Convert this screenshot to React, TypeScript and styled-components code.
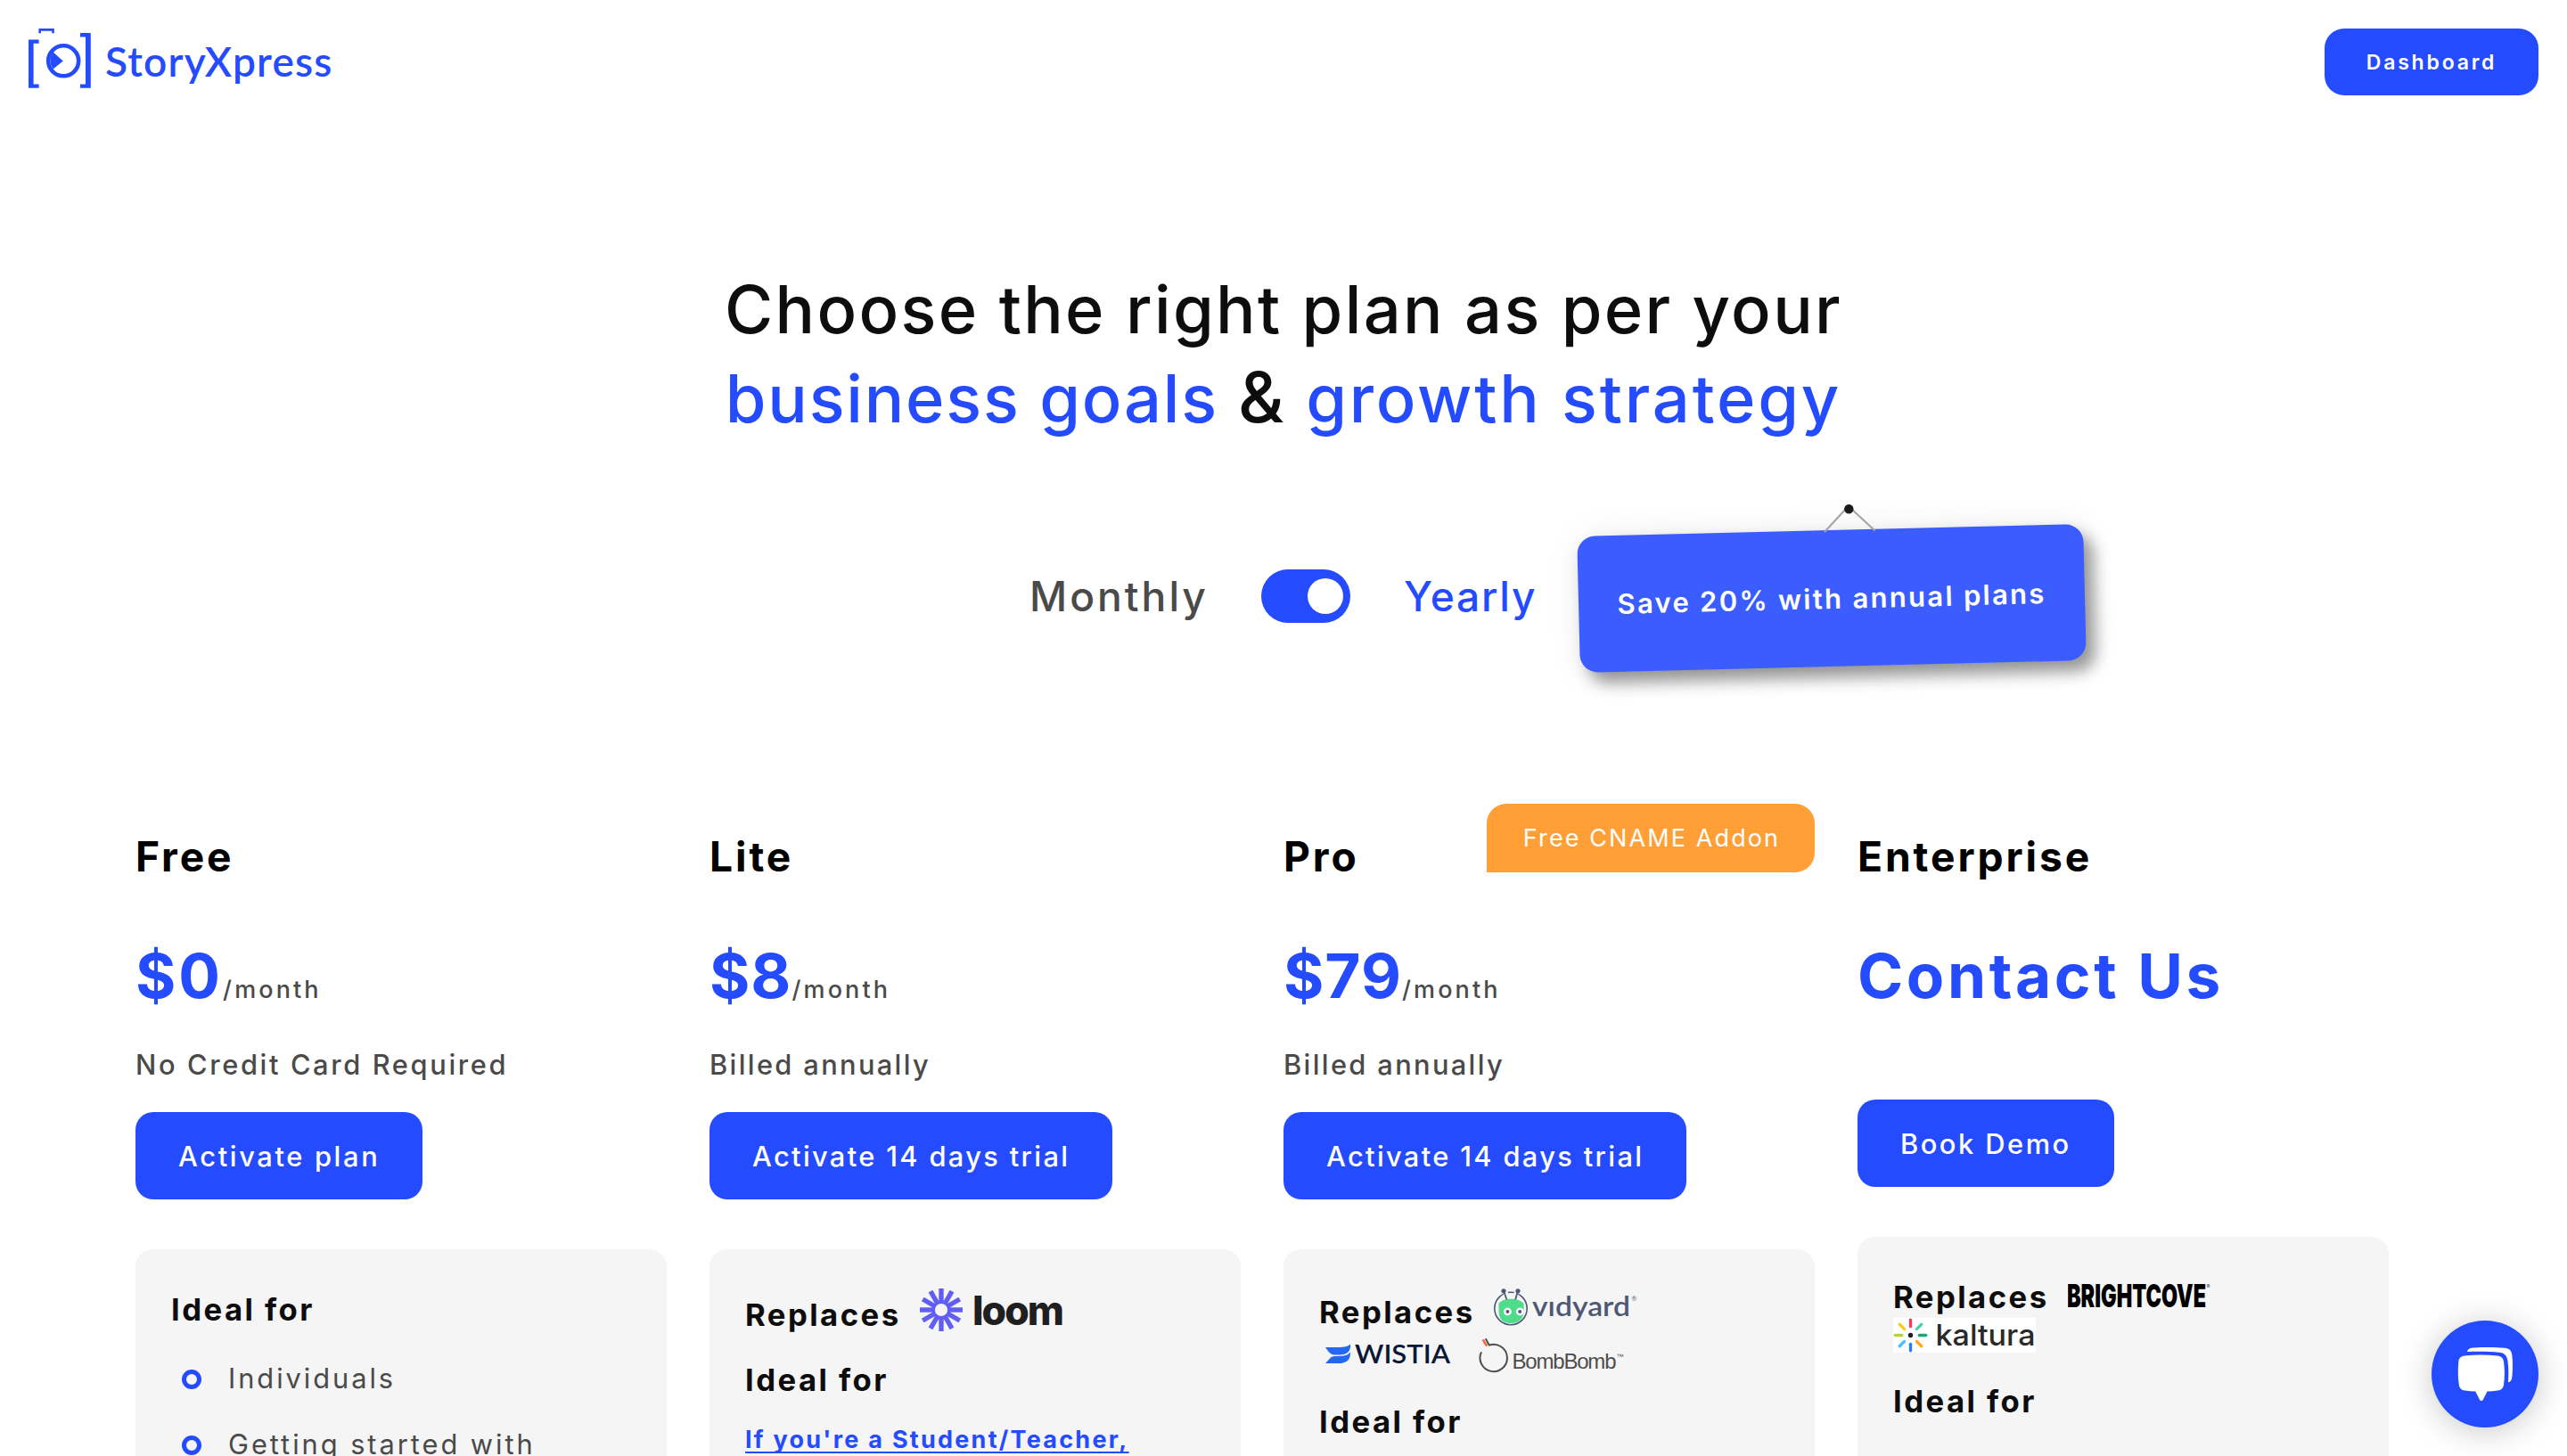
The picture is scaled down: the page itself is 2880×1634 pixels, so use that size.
import * as React from "react";
import styled, { createGlobalStyle, css } from "styled-components";

const colors = {
    primary: "#254bff",
    text: "#4a4a4a",
    heading: "#0d0d0d",
    card: "#f5f5f5",
    addon: "#ff9f36"
};

type Brand = "loom" | "vidyard" | "wistia" | "bombbomb" | "brightcove" | "kaltura";

interface IPlan {
    name: string;
    price: string;
    priceTrack: number;
    unit?: string;
    note?: string;
    noteTrack?: number;
    action: string;
    actionTrack: number;
    addon?: string;
    replaces?: Brand[][];
    features?: string[];
    link?: string;
}

const plans: IPlan[] = [
    {
        name: "Free",
        price: "$0",
        priceTrack: 3,
        unit: "/month",
        note: "No Credit Card Required",
        noteTrack: 2.63,
        action: "Activate plan",
        actionTrack: 2.65,
        features: ["Individuals", "Getting started with"]
    },
    {
        name: "Lite",
        price: "$8",
        priceTrack: 1,
        unit: "/month",
        note: "Billed annually",
        noteTrack: 2.35,
        action: "Activate 14 days trial",
        actionTrack: 2.35,
        replaces: [["loom"]],
        link: "If you're a Student/Teacher,"
    },
    {
        name: "Pro",
        price: "$79",
        priceTrack: 1,
        unit: "/month",
        note: "Billed annually",
        noteTrack: 2.35,
        action: "Activate 14 days trial",
        actionTrack: 2.35,
        addon: "Free CNAME Addon",
        replaces: [["vidyard"], ["wistia", "bombbomb"]]
    },
    {
        name: "Enterprise",
        price: "Contact Us",
        priceTrack: 3.6,
        action: "Book Demo",
        actionTrack: 2.5,
        replaces: [["brightcove"], ["kaltura"]]
    }
];

const LogoMark = () => (
    <svg width="72" height="75" viewBox="0 0 72 75" fill={colors.primary}>
        <path d="M0 12.4h11.6v4.4H5.6v45.6h6v4.4H0z" />
        <path d="M69.8 5H58v4.6h6v52.8h-6v4.4h11.8z" />
        <path d="M11.4 5.2V0h17.4v5.2h-2.6V2.8H14v2.4z" />
        <circle cx="39.2" cy="36.3" r="17" fill="none" stroke={colors.primary} strokeWidth="4.6" />
        <path d="M27.6 26.6l11.2 9.8-11.2 9.2a16 16 0 0 1 0-19z" />
    </svg>
);

const LoomLogo = () => (
    <svg width="170" height="48" viewBox="0 0 170 48">
        <g stroke="#625df5" strokeWidth="5.4">
            {Array.from({ length: 12 }, (_, i) => (
                <line key={i} x1="24" y1="14.5" x2="24" y2="0" transform={`rotate(${i * 30} 24 24)`} />
            ))}
            <circle cx="24" cy="24" r="8.8" strokeWidth="3.4" fill="none" />
        </g>
        <text x="59" y="41" fontFamily="Inter" fontSize="45" fontWeight="800" letterSpacing="-2" fill="#1f1f1f" textLength="101" lengthAdjust="spacingAndGlyphs">loom</text>
    </svg>
);

const VidyardLogo = () => (
    <svg width="164" height="44" viewBox="0 0 164 44">
        <circle cx="19" cy="22.5" r="18.2" fill="none" stroke="#4c5876" strokeWidth="1.6" />
        <path d="M9 0h5l3 7H11zM24 0h5l-2 7h-5z" fill={colors.card} />
        <path d="M5.5 17C10 10 28 10 33.5 17v8C33.5 34 28 39 19 39S5.5 34 5.5 25z" fill="#4fdc8b" />
        <g stroke="#4c5876" strokeWidth="1.8" fill="#4c5876">
            <path d="M11.2 3l3.2 9.5M26.8 3l-2.6 9.5" />
            <circle cx="11" cy="2.8" r="1.7" />
            <circle cx="27" cy="2.8" r="1.7" />
        </g>
        <circle cx="15.4" cy="26" r="4.4" fill="#fff" />
        <circle cx="29.2" cy="26" r="4.4" fill="#fff" />
        <circle cx="15.4" cy="26" r="2" fill="#4c5876" />
        <circle cx="29.2" cy="26" r="2" fill="#4c5876" />
        <text x="43" y="31" fontFamily="Lato" fontSize="31" fontWeight="600" fill="#4c5876" textLength="110" lengthAdjust="spacingAndGlyphs">vıdyard</text>
        <text x="154.5" y="14" fontFamily="Lato" fontSize="7" fill="#4c5876">®</text>
    </svg>
);

const WistiaLogo = () => (
    <svg width="160" height="40" viewBox="0 0 160 40">
        <path d="M7 11h14c7 0 12-1 14-3.5 1 8-4 12-12 12h-6c-4 0-7-4-10-8.5z" fill="#2468f2" />
        <path d="M7 29l6-6.5c1-1 3-1.5 5-1.5 8 0 14-.5 17-4.5.5 9-5 12.5-13 12.5z" fill="#2468f2" />
        <text x="40" y="29" fontFamily="Lato" fontSize="28" fontWeight="600" fill="#0a1735" textLength="107" lengthAdjust="spacingAndGlyphs">WISTIA</text>
    </svg>
);

const BombBombLogo = () => (
    <svg width="168" height="40" viewBox="0 0 168 40">
        <g fill="none" stroke="#4d4d4d" strokeWidth="2">
            <path d="M6 16.4A15.2 15.2 0 1 0 14.7 8.6L10.7 1.3" />
            <path d="M7.7 2.3l4.4 7.3" stroke="#f26a3a" strokeWidth="2.6" />
        </g>
        <text x="40.5" y="35" fontFamily="Liberation Sans" fontSize="24" fill="#4d4d4d" textLength="117">BombBomb</text>
        <text x="157.5" y="24" fontFamily="Liberation Sans" fontSize="8" fill="#4d4d4d">™</text>
    </svg>
);

const BrightcoveLogo = () => (
    <svg width="170" height="44" viewBox="0 0 170 44">
        <text x="-1" y="32.5" fontFamily="Inter" fontSize="35.5" fontWeight="900" fill="#000" textLength="156" lengthAdjust="spacingAndGlyphs">BRIGHTCOVE</text>
        <text x="155.5" y="12" fontFamily="Inter" fontSize="6" fill="#444">®</text>
    </svg>
);

const kalturaRays = ["#f9385a", "#45d3ac", "#17a77c", "#ffa61e", "#1f7cff", "#47bdff", "#b5d92a", "#ffc91f"];

const KalturaLogo = () => (
    <svg width="160" height="39" viewBox="0 0 160 39">
        <rect width="160" height="39" fill="#fff" />
        <circle cx="19.5" cy="19.5" r="2.7" fill="#222" />
        {kalturaRays.map((color, i) => (
            <line key={color} x1="19.5" y1="9.7" x2="19.5" y2="2.2" stroke={color} strokeWidth="3.3" strokeLinecap="round"
                transform={`rotate(${i * 45} 19.5 19.5)`} />
        ))}
        <text x="47.5" y="31" fontFamily="Inter" fontSize="33" fontWeight="500" fill="#2a2a2a" textLength="112" lengthAdjust="spacingAndGlyphs">kaltura</text>
    </svg>
);

const ChatIcon = () => (
    <svg width="120" height="120" viewBox="0 0 120 120" fill="#fff">
        <path d="M40 35c1-3.5 3.5-4.3 8-4.5 12-.7 24-.6 34 .3 5 .5 7.500 2.700 8.200 7.200 1.200 8 1 18 .2 25-.5 4-1.600 6-4.400 6.300.6-9 .6-16-.6-24.300-.9-6-4-8.600-9.400-9.200-11-1.200-24-1.200-36-.8z" />
        <path d="M37 39.5c12-1.2 25-1.2 37 0 4.200.5 6.300 2.400 7 6.500 1.300 8.500 1.200 17.500 0 26-.6 4-2.600 5.800-6.500 6.500-4 .6-8 .9-12 1l-4.500 9c-1.200 2-3 2-4.200 0l-4.500-9c-4-.1-8-.4-12-1-4-.7-5.900-2.500-6.500-6.500-1.300-8.500-1.200-17.500-.5-26 .5-4 2.700-6 6.700-6.500z" />
    </svg>
);

const brandLogos: Record<Brand, React.FC> = {
    loom: LoomLogo,
    vidyard: VidyardLogo,
    wistia: WistiaLogo,
    bombbomb: BombBombLogo,
    brightcove: BrightcoveLogo,
    kaltura: KalturaLogo
};

function Replaces({ rows }: { rows: Brand[][] }) {
    const [first, ...rest] = rows;
    const FirstLogo = brandLogos[first[0]];
    return <ReplacesBlock $wrapped={rest.length > 0}>
        <ReplacesRow>
            <ReplacesTitle>Replaces</ReplacesTitle>
            <LogoSlot $brand={first[0]}><FirstLogo /></LogoSlot>
        </ReplacesRow>
        {rest.map(row => <ReplacesRow key={row[0]}>
            {row.map(brand => {
                const Logo = brandLogos[brand];
                return <LogoSlot key={brand} $brand={brand}><Logo /></LogoSlot>;
            })}
        </ReplacesRow>)}
    </ReplacesBlock>;
}

function Plan({ plan }: { plan: IPlan }) {
    return <PlanColumn>
        <PlanHeader>
            <PlanName>{plan.name}</PlanName>
            {plan.addon && <AddonBadge>{plan.addon}</AddonBadge>}
        </PlanHeader>
        <PriceLine>
            <Price $track={plan.priceTrack}>{plan.price}</Price>
            {plan.unit && <Unit>{plan.unit}</Unit>}
        </PriceLine>
        {plan.note && <Note $track={plan.noteTrack}>{plan.note}</Note>}
        <PlanButton $spaced={!plan.note} $track={plan.actionTrack}>{plan.action}</PlanButton>
        <Card>
            {plan.replaces && <Replaces rows={plan.replaces} />}
            <CardTitle>Ideal for</CardTitle>
            {plan.features && <FeatureList>
                {plan.features.map(f => <Feature key={f}><Ring />{f}</Feature>)}
            </FeatureList>}
            {plan.link && <CardLink href="#">{plan.link}</CardLink>}
        </Card>
    </PlanColumn>;
}

export default function App() {
    return <Page>
        <GlobalStyle />
        <Header>
            <Logo>
                <LogoMark />
                <LogoText>StoryXpress</LogoText>
            </Logo>
            <DashboardButton>Dashboard</DashboardButton>
        </Header>

        <Title>
            Choose the right plan as per your<br />
            <Accent $track={1.8}>business goals</Accent> <Ampersand>&amp;</Ampersand> <Accent $track={2.8}>growth strategy</Accent>
        </Title>

        <BillingRow>
            <BillingLabel $track={3}>Monthly</BillingLabel>
            <Toggle role="switch" aria-checked="true"><Knob /></Toggle>
            <BillingLabel $active $track={1.7}>Yearly</BillingLabel>
            <Sign>
                <SignBoard>Save 20% with annual plans</SignBoard>
                <Pin width="70" height="42" viewBox="0 0 70 42">
                    <path d="M31 11L7 37M37 11l26.5 24.5" fill="none" stroke="#a3a3a3" strokeWidth="2" />
                    <circle cx="34.3" cy="11.3" r="5.2" fill="#1a1a1a" />
                </Pin>
            </Sign>
        </BillingRow>

        <Plans>
            {plans.map(plan => <Plan key={plan.name} plan={plan} />)}
        </Plans>

        <ChatButton aria-label="Chat"><ChatIcon /></ChatButton>
    </Page>;
}

const GlobalStyle = createGlobalStyle`
    * {
        box-sizing: border-box;
    }
    body {
        margin: 0;
        background: #fff;
        color: ${colors.heading};
        font-family: Inter, "Open Sans", sans-serif;
    }
    svg {
        display: block;
        flex: none;
    }
`;

const Page = styled.main`
    height: 1634px;
    overflow: hidden;
`;

const Header = styled.header`
    display: flex;
    justify-content: space-between;
    align-items: flex-start;
    height: 139px;
    padding: 32px;
`;

const Logo = styled.div`
    display: flex;
    gap: 14px;
`;

const LogoText = styled.span`
    font: 600 46px/74px Lato, sans-serif;
    letter-spacing: 1.2px;
    color: ${colors.primary};
`;

const buttonBase = css`
    display: inline-flex;
    align-items: center;
    justify-content: center;
    border: 0;
    padding: 0 48px;
    background: ${colors.primary};
    color: #fff;
    font-family: inherit;
    white-space: nowrap;
`;

const DashboardButton = styled.button`
    ${buttonBase}
    width: 240px;
    height: 75px;
    border-radius: 22px;
    font-size: 23px;
    font-weight: 600;
    letter-spacing: 2.8px;
`;

const Title = styled.h1`
    margin: 159px 0 0;
    font-size: 74px;
    font-weight: 500;
    line-height: 99.5px;
    letter-spacing: 2.35px;
    text-align: center;
`;

const Accent = styled.span<{ $track: number }>`
    color: ${colors.primary};
    letter-spacing: ${p => p.$track}px;
`;

const Ampersand = styled.span`
    font-size: 79px;
    line-height: 1;
`;

const BillingRow = styled.div`
    display: grid;
    grid-template-columns: 200px 100px 136px 568px;
    column-gap: 60px;
    align-items: center;
    margin-top: 92px;
    padding-left: 1155px;
`;

const BillingLabel = styled.span<{ $active?: boolean; $track: number }>`
    font-size: 46.2px;
    font-weight: 500;
    line-height: 60px;
    letter-spacing: ${p => p.$track}px;
    color: ${p => p.$active ? colors.primary : colors.text};
`;

const Toggle = styled.div`
    display: flex;
    align-items: center;
    justify-content: flex-end;
    height: 60px;
    padding: 0 8px;
    border-radius: 30px;
    background: ${colors.primary};
`;

const Knob = styled.span`
    width: 40px;
    height: 40px;
    border-radius: 50%;
    background: #fff;
`;

const Sign = styled.div`
    position: relative;
    margin-top: 6px;
`;

const SignBoard = styled.div`
    display: flex;
    align-items: center;
    justify-content: center;
    height: 153px;
    border-radius: 20px;
    background: #3b5dff;
    color: #fff;
    font-size: 31px;
    font-weight: 600;
    letter-spacing: 2.3px;
    transform: rotate(-1.4deg);
    box-shadow: 10px 12px 18px rgba(0, 0, 0, .4), 0 0 36px rgba(0, 0, 0, .08);
`;

const Pin = styled.svg`
    position: absolute;
    left: 269px;
    top: -35px;
`;

const Plans = styled.section`
    display: grid;
    grid-template-columns: repeat(4, 596px);
    column-gap: 48px;
    margin-top: 185px;
    padding-left: 152px;
`;

const PlanColumn = styled.article`
    display: flex;
    flex-direction: column;
    align-items: flex-start;
`;

const PlanHeader = styled.div`
    position: relative;
    width: 100%;
`;

const PlanName = styled.h2`
    margin: 0;
    color: #000;
    font-size: 46.2px;
    font-weight: 700;
    line-height: 56px;
    letter-spacing: 2.9px;
`;

const AddonBadge = styled.span`
    position: absolute;
    top: -31px;
    right: 0;
    width: 368px;
    padding-left: 2px;
    border-radius: 22px 22px 22px 0;
    background: ${colors.addon};
    color: #fff;
    font-size: 27px;
    line-height: 77px;
    letter-spacing: 2.1px;
    text-align: center;
`;

const PriceLine = styled.div`
    display: flex;
    align-items: baseline;
    height: 84px;
    margin-top: 64px;
`;

const Price = styled.span<{ $track: number }>`
    color: ${colors.primary};
    font-size: 69.3px;
    font-weight: 700;
    line-height: 84px;
    letter-spacing: ${p => p.$track}px;
`;

const Unit = styled.span`
    color: ${colors.text};
    font-size: 27px;
    font-weight: 500;
    letter-spacing: 3.1px;
`;

const Note = styled.p<{ $track?: number }>`
    margin: 38px 0 0;
    color: ${colors.text};
    font-size: 30.8px;
    font-weight: 500;
    line-height: 40px;
    letter-spacing: ${p => p.$track}px;
`;

const PlanButton = styled.button<{ $spaced: boolean; $track: number }>`
    ${buttonBase}
    height: 98px;
    margin-top: ${p => p.$spaced ? 97 : 33}px;
    border-radius: 20px;
    font-size: 30.8px;
    font-weight: 500;
    letter-spacing: ${p => p.$track}px;
`;

const Card = styled.div`
    width: 100%;
    min-height: 420px;
    margin-top: 56px;
    padding: 45px 40px;
    border-radius: 20px;
    background: ${colors.card};
`;

const CardTitle = styled.h3`
    margin: 0;
    font-size: 34.7px;
    font-weight: 700;
    line-height: 44px;
    letter-spacing: 2.45px;
`;

const ReplacesBlock = styled.div<{ $wrapped: boolean }>`
    margin-bottom: ${p => p.$wrapped ? 32 : 29}px;
`;

const ReplacesRow = styled.div`
    display: flex;
    align-items: flex-end;
    gap: 16px;
`;

const ReplacesTitle = styled(CardTitle)`
    width: 180px;
`;

// the artwork of every brand sits on its own baseline
const slotStyles: Record<Brand, ReturnType<typeof css>> = {
    loom: css`margin: -1px 0 3px;`,
    vidyard: css`margin: -1px 0 4px;`,
    wistia: css`margin-top: 7px;`,
    bombbomb: css`margin-top: 7px;`,
    brightcove: css`margin-bottom: -1px;`,
    kaltura: css`margin-top: 2px;`
};

const LogoSlot = styled.span<{ $brand: Brand }>`
    ${p => slotStyles[p.$brand]}
`;

const FeatureList = styled.ul`
    margin: 18px 0 0;
    padding: 0 0 0 12px;
    list-style: none;
`;

const Feature = styled.li`
    display: flex;
    align-items: center;
    gap: 30px;
    height: 74px;
    color: ${colors.text};
    font-size: 30.8px;
    letter-spacing: 2.95px;
`;

const Ring = styled.span`
    width: 22px;
    height: 22px;
    margin-top: 4px;
    border: 5.5px solid ${colors.primary};
    border-radius: 50%;
`;

const CardLink = styled.a`
    display: block;
    margin-top: 28px;
    color: ${colors.primary};
    font-size: 27px;
    font-weight: 700;
    line-height: 36px;
    letter-spacing: 2.25px;
    text-decoration-thickness: 2px;
    text-underline-offset: 4px;
    text-decoration-skip-ink: none;
`;

const ChatButton = styled.button`
    position: fixed;
    right: 32px;
    bottom: 32px;
    width: 120px;
    height: 120px;
    padding: 0;
    border: 0;
    border-radius: 50%;
    background: ${colors.primary};
    box-shadow: 0 4px 36px rgba(0, 0, 0, .22);
`;
